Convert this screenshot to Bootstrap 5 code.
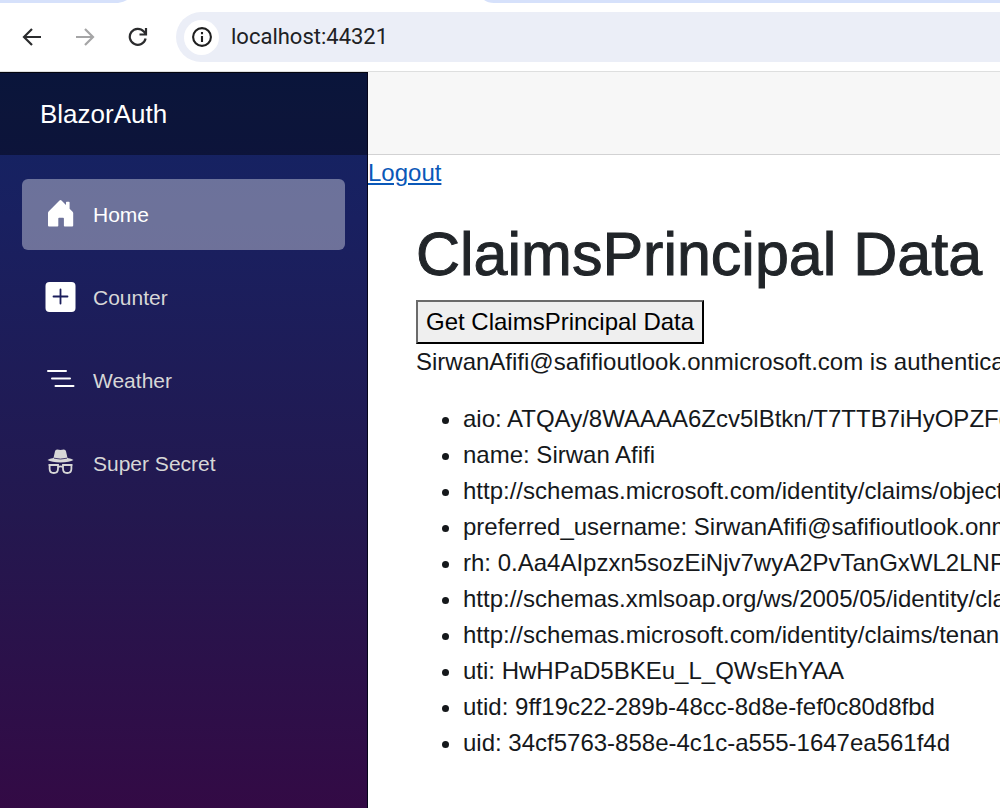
<!DOCTYPE html>
<html lang="en">
<head>
<meta charset="utf-8">
<meta name="viewport" content="width=device-width, initial-scale=1">
<title>BlazorAuth</title>
<link href="https://cdn.jsdelivr.net/npm/bootstrap@5.3.0/dist/css/bootstrap.min.css" rel="stylesheet">
<style>
  body { font-family: "Liberation Sans", Arial, sans-serif; font-size: 24px; line-height: 36px; color: #15181b; }
  .tab-strip { height: 3px; background: #d6e1fb; }
  .toolbar { height: 69px; padding-left: 5px; background: #fff; border-bottom: 1px solid #dedfdf; }
  .tool-btn { width: 53px; height: 50px; }
  .address { height: 50px; background: #ebeef7; border-radius: 25px 0 0 25px; margin-left: 12px; padding-left: 8px; }
  .site-info { width: 35px; height: 35px; }
  .url-input { font-family: Roboto, sans-serif; font-size: 22px; line-height: 28px; color: #202124; margin-left: 12px; outline: 0; }
  .sidebar { width: 368px; background: linear-gradient(180deg, #122463 0%, #192060 20%, #23184f 60%, #330a45 100%); border-right: 1px solid #05051a; border-top: 1px solid #05060f; }
  .brand-row { height: 82px; padding-left: 40px; background: rgba(0, 0, 0, .4); }
  .brand-link { font-size: 26px; color: #fff; }
  .side-nav { padding: 24px 22px; gap: 12px; }
  .side-link { height: 71px; padding-left: 23px; gap: 17px; border-radius: 6px; font-size: 21px; color: #d7d7d7; }
  .side-link.active { background: rgba(255, 255, 255, .37); color: #fff; }
  .side-link svg { width: 31px; height: 31px; }
  .top-row { height: 83px; background: #f7f7f7; border-bottom: 1px solid #d2d2d3; }
  .logout-link { color: #0a58b8; }
  .page-main { min-width: 0; }
  .claims { padding: 28px 0 0 48px; }
  .claims-title { font-size: 61px; line-height: 70px; font-weight: 400; color: #212529; -webkit-text-stroke: 1px #212529; }
  .claims-btn { height: 44px; padding: 0 8px; margin-top: 11px; border: 2px solid; border-color: #6b6b6b #000 #000 #6b6b6b; background: #efefef; color: #000; }
  .claims-list { padding-left: 47px; margin: 21px 0 0; }
</style>
</head>
<body class="d-flex flex-column min-vh-100 overflow-x-hidden bg-white">
<header>
  <div class="tab-strip overflow-hidden"><svg class="d-block" width="100%" height="3"><path d="M0 3H118Q124 2 127 0H484Q488 3 494 3Z" fill="#fff"/></svg></div>
  <div class="toolbar d-flex align-items-center">
    <button type="button" class="tool-btn btn p-0 border-0 d-flex align-items-center justify-content-center" aria-label="Back">
      <svg width="20" height="20" viewBox="0 0 20 20" fill="none" stroke="#2b2c2e" stroke-width="2.2"><path d="M19 10H2.5M10 2L2 10l8 8"/></svg>
    </button>
    <button type="button" class="tool-btn btn p-0 border-0 d-flex align-items-center justify-content-center" aria-label="Forward">
      <svg width="20" height="20" viewBox="0 0 20 20" fill="none" stroke="#a5a5a6" stroke-width="2.2"><path d="M1 10h16.500M10 2l8 8-8 8"/></svg>
    </button>
    <button type="button" class="tool-btn btn p-0 border-0 d-flex align-items-center justify-content-center" aria-label="Reload">
      <svg width="20" height="20" viewBox="0 0 20 20" fill="none" stroke="#2b2c2e" stroke-width="2.2"><path d="M17.600 11.500A8 8 0 1 1 15.800 4.500L18 7M18 1v6.500H11.500"/></svg>
    </button>
    <div class="address d-flex align-items-center flex-grow-1">
      <button type="button" class="site-info btn p-0 border-0 bg-white rounded-circle d-flex align-items-center justify-content-center" aria-label="Site information">
        <svg width="20" height="20" viewBox="0 0 20 20" fill="none" stroke="#1f1f1f" stroke-width="2.100"><circle cx="10" cy="10" r="8.900"/><path d="M10 9v6M10 5v2.200"/></svg>
      </button>
      <input class="url-input border-0 bg-transparent p-0 flex-grow-1" type="text" value="localhost:44321" aria-label="Address">
    </div>
  </div>
</header>
<div class="d-flex flex-grow-1">
  <aside class="sidebar flex-shrink-0">
    <div class="brand-row d-flex align-items-center"><a class="brand-link text-decoration-none" href="#">BlazorAuth</a></div>
    <nav class="side-nav d-flex flex-column">
      <a class="side-link active d-flex align-items-center text-decoration-none" href="#">
        <svg viewBox="0 0 31 31" fill="#fff"><path d="M14.500 1.500q1-.9 2 0L21 6V3.500q0-.7.7-.7h2.200q.7 0 .7.700v6.200l3 3q.6.600.6 1.400V26.500q0 1-1 1h-7.500q-.8 0-.8-.8V19.500q0-.8-.8-.8h-4q-.8 0-.8.800v7.200q0 .8-.8.800H4q-1 0-1-1V14q0-.8.600-1.400z"/></svg>
        <span>Home</span></a>
      <a class="side-link d-flex align-items-center text-decoration-none" href="#">
        <svg viewBox="0 0 31 31"><rect x="0.500" y="0" width="30" height="30" rx="4" fill="#fff"/><path d="M8.500 14.500h14M15.500 7.500v14" stroke="#1a1d5b" stroke-width="1.800" stroke-linecap="round"/></svg>
        <span>Counter</span></a>
      <a class="side-link d-flex align-items-center text-decoration-none" href="#">
        <svg viewBox="0 0 31 31" fill="none" stroke="#fff" stroke-width="2" stroke-linecap="round"><path d="M3 6h18M7 13.500h18M10.500 21h18"/></svg>
        <span>Weather</span></a>
      <a class="side-link d-flex align-items-center text-decoration-none" href="#">
        <svg viewBox="0 0 31 31" fill="#d7d7d7"><path d="M8.500 10 10 3.300Q10.400 1.500 12.300 1.600q3.200.8 6.400 0 1.900-.1 2.300 1.700L22.500 10q4 .7 6 2-4 2.400-13 2.400T2.500 12q2-1.300 6-2z"/><path d="M9 10.200q6.500 1.700 13 0" fill="none" stroke="#241a55" stroke-width=".8"/><g fill="none" stroke="#d7d7d7" stroke-width="1.800"><path d="M3.500 17H13v3.700q0 4.300-4.200 4.300t-4.200-4.300V17M27.500 17H18v3.700q0 4.300 4.200 4.300t4.200-4.300V17M13 19q2.500-1.400 5 0"/></g></svg>
        <span>Super Secret</span></a>
    </nav>
  </aside>
  <main class="page-main flex-grow-1 overflow-hidden text-nowrap">
    <div class="top-row"></div>
    <a class="logout-link" href="#">Logout</a>
    <article class="claims">
      <h1 class="claims-title m-0">ClaimsPrincipal Data</h1>
      <button type="button" class="claims-btn d-block">Get ClaimsPrincipal Data</button>
      <p class="m-0">SirwanAfifi@safifioutlook.onmicrosoft.com is authenticated</p>
      <ul class="claims-list">
        <li>aio: ATQAy/8WAAAA6Zcv5lBtkn/T7TTB7iHyOPZFq</li>
        <li>name: Sirwan Afifi</li>
        <li>http://schemas.microsoft.com/identity/claims/object</li>
        <li>preferred_username: SirwanAfifi@safifioutlook.onm</li>
        <li>rh: 0.Aa4AIpzxn5sozEiNjv7wyA2PvTanGxWL2LNPc</li>
        <li>http://schemas.xmlsoap.org/ws/2005/05/identity/cla</li>
        <li>http://schemas.microsoft.com/identity/claims/tenan</li>
        <li>uti: HwHPaD5BKEu_L_QWsEhYAA</li>
        <li>utid: 9ff19c22-289b-48cc-8d8e-fef0c80d8fbd</li>
        <li>uid: 34cf5763-858e-4c1c-a555-1647ea561f4d</li>
      </ul>
    </article>
  </main>
</div>
<script src="https://cdn.jsdelivr.net/npm/bootstrap@5.3.0/dist/js/bootstrap.bundle.min.js"></script>
</body>
</html>
